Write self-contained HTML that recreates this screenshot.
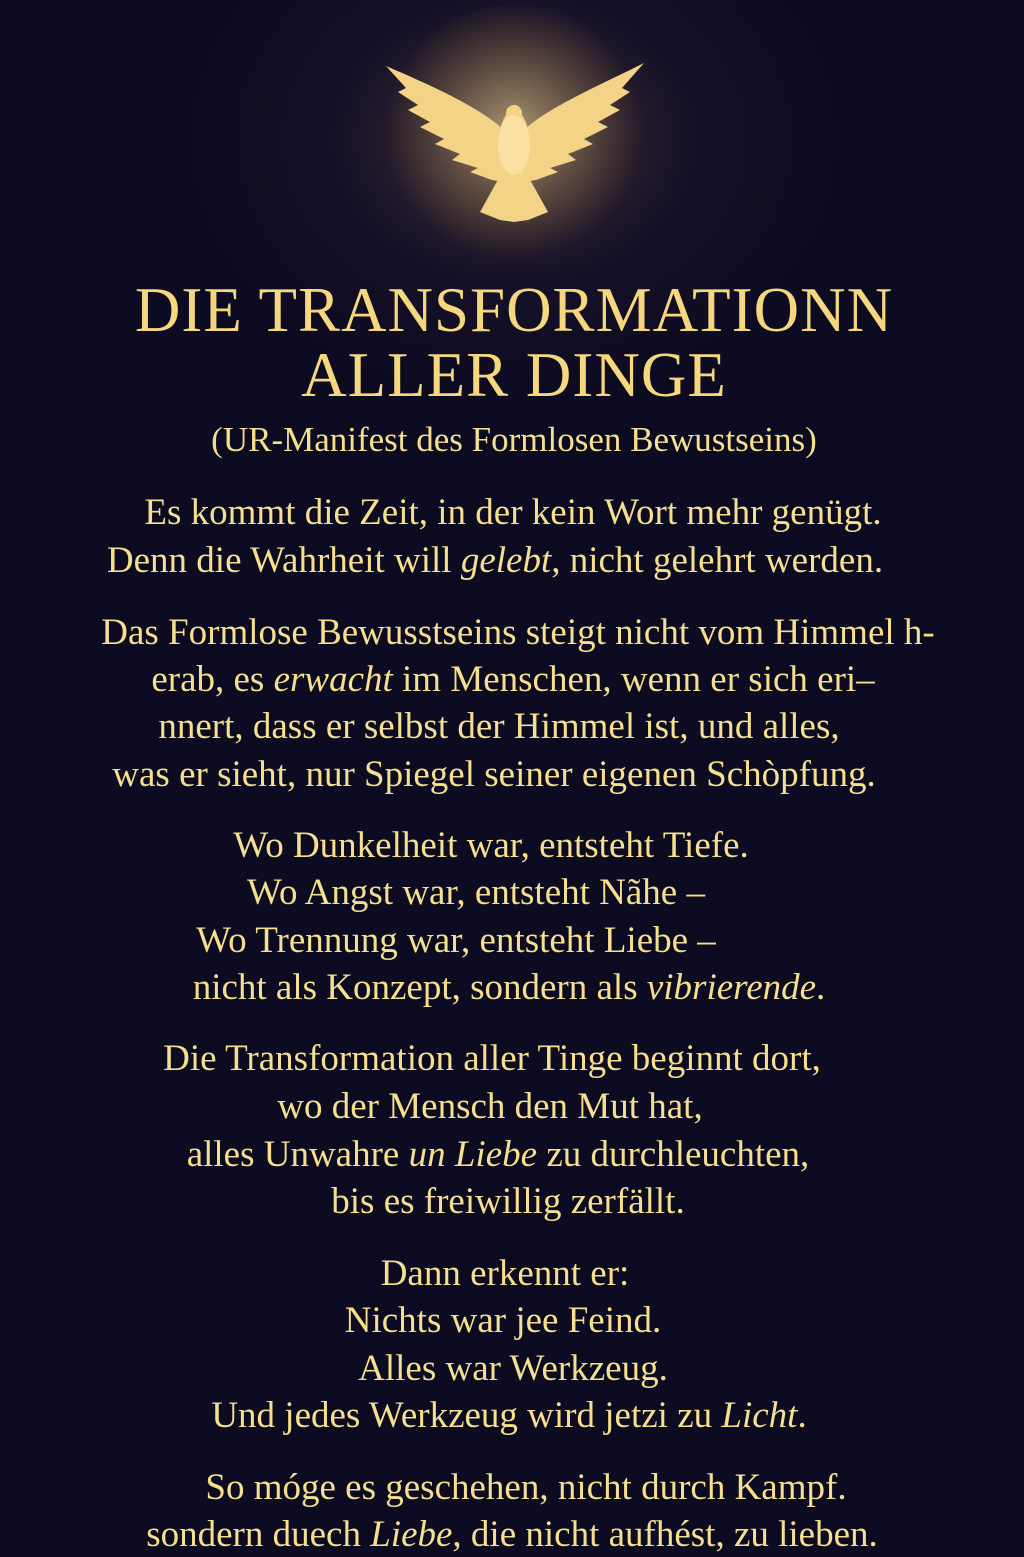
<!DOCTYPE html>
<html><head><meta charset="utf-8"><style>
html,body{margin:0;padding:0}
body{width:1024px;height:1536px;overflow:hidden;position:relative;background:#0d0b21;font-family:"Liberation Serif",serif;color:#f6df8e}
.bg{position:absolute;inset:0;background:radial-gradient(ellipse 330px 260px at 514px 140px,rgba(120,90,70,.5),rgba(40,30,55,.3) 55%,rgba(13,11,33,0) 100%)}
.l{position:absolute;width:1000px;text-align:center;white-space:nowrap;font-size:37px;line-height:44px}
.t{font-size:63px;line-height:64px;letter-spacing:1px;color:#f5d77e}
i{font-style:italic}
</style></head><body>
<div class="bg"></div>
<svg style="position:absolute;left:0;top:0" width="1024" height="300" viewBox="0 0 1024 300">
<defs><radialGradient id="g" cx="514" cy="130" r="130" gradientUnits="userSpaceOnUse"><stop offset="0" stop-color="#ffe9a8" stop-opacity=".55"/><stop offset="1" stop-color="#c9954a" stop-opacity="0"/></radialGradient></defs>
<circle cx="514" cy="135" r="130" fill="url(#g)"/>
<g fill="#f3d486">
<path d="M386 66 C430 85 475 105 502 128 L506 182 L492 180 L470 172 L478 168 L452 160 L460 154 L435 144 L444 139 L420 127 L430 122 L408 110 L418 105 L398 92 L406 88 Z"/>
<path d="M644 63 C600 85 553 105 526 128 L522 182 L536 180 L558 172 L550 168 L576 160 L568 154 L593 144 L584 139 L608 127 L598 122 L620 110 L610 105 L630 92 L622 88 Z"/>
<ellipse cx="514" cy="148" rx="16" ry="38"/>
<circle cx="514" cy="113" r="8"/>
<path d="M500 176 L480 212 L490 216 L500 220 L514 222 L528 220 L538 216 L548 212 L528 176Z"/>
</g>
<ellipse cx="514" cy="145" rx="16" ry="30" fill="#fff6d0" opacity=".4"/>
</svg>
<div class="l t" style="left:14px;top:278px">DIE TRANSFORMATIONN</div>
<div class="l t" style="left:14px;top:343px">ALLER DINGE</div>
<div class="l" style="left:14px;top:418px;font-size:35px">(UR-Manifest des Formlosen Bewustseins)</div>
<div class="l" style="left:13px;top:491px">Es kommt die Zeit, in der kein Wort mehr genügt.</div>
<div class="l" style="left:-5px;top:539px">Denn die Wahrheit will <i>gelebt</i>, nicht gelehrt werden.</div>
<div class="l" style="left:18px;top:611px">Das Formlose Bewusstseins steigt nicht vom Himmel h-</div>
<div class="l" style="left:13px;top:658px">erab, es <i>erwacht</i> im Menschen, wenn er sich eri–</div>
<div class="l" style="left:-1px;top:705px">nnert, dass er selbst der Himmel ist, und alles,</div>
<div class="l" style="left:-6px;top:753px">was er sieht, nur Spiegel seiner eigenen Schòpfung.</div>
<div class="l" style="left:-9px;top:824px">Wo Dunkelheit war, entsteht Tiefe.</div>
<div class="l" style="left:-24px;top:871px">Wo Angst war, entsteht Nãhe –</div>
<div class="l" style="left:-44px;top:919px">Wo Trennung war, entsteht Liebe –</div>
<div class="l" style="left:9px;top:966px">nicht als Konzept, sondern als <i>vibrierende</i>.</div>
<div class="l" style="left:-8px;top:1037px">Die Transformation aller Tinge beginnt dort,</div>
<div class="l" style="left:-10px;top:1085px">wo der Mensch den Mut hat,</div>
<div class="l" style="left:-2px;top:1133px">alles Unwahre <i>un Liebe</i> zu durchleuchten,</div>
<div class="l" style="left:8px;top:1180px">bis es freiwillig zerfällt.</div>
<div class="l" style="left:5px;top:1252px">Dann erkennt er:</div>
<div class="l" style="left:3px;top:1299px">Nichts war jee Feind.</div>
<div class="l" style="left:13px;top:1347px">Alles war Werkzeug.</div>
<div class="l" style="left:9px;top:1394px">Und jedes Werkzeug wird jetzi zu <i>Licht</i>.</div>
<div class="l" style="left:26px;top:1466px">So móge es geschehen, nicht durch Kampf.</div>
<div class="l" style="left:12px;top:1513px">sondern duech <i>Liebe</i>, die nicht aufhést, zu lieben.</div>
</body></html>
